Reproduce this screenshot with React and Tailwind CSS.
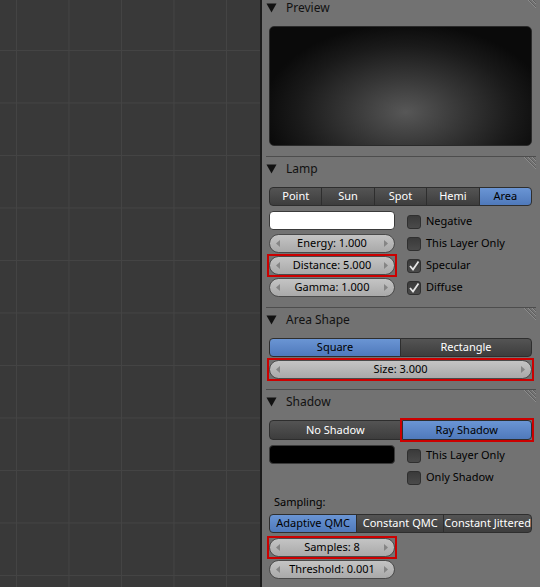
import React from 'react';

const font = { fontFamily: '"Noto Sans", "DejaVu Sans", sans-serif' };

function Hatch() {
  return (
    <svg width="16" height="16" viewBox="0 0 16 16" className="absolute right-[4px] top-[0px]">
      <path d="M4 0 L16 12 M8 0 L16 8 M12 0 L16 4" stroke="#8c8c8c" strokeWidth="1" />
      <path d="M5 0 L16 11 M9 0 L16 7 M13 0 L16 3" stroke="#5e5e5e" strokeWidth="1" />
    </svg>
  );
}

function Header({ title, first }) {
  return (
    <div className={`relative flex items-center h-[24px] ${first ? '-mt-[4px]' : ''}`}>
      <svg width="11" height="10" viewBox="0 0 11 10" className="ml-[4px] mr-[9px]">
        <path d="M0.5 0.5 H10.5 L5.5 9.5 Z" fill="#111" />
      </svg>
      <span className="text-[12px] text-[#111]">{title}</span>
      <Hatch />
    </div>
  );
}

function Section({ title, first, children, pb = 'pb-[10px]' }) {
  return (
    <div className={`${first ? '' : 'border-t border-[#4d4d4d] mx-[4px]'}`}>
      <div className={first ? '' : '-mx-[4px]'}>
        <Header title={title} first={first} />
        <div className={`px-[7px] pr-[8px] pt-[6px] ${pb}`}>{children}</div>
      </div>
    </div>
  );
}

function Toggle({ items, active }) {
  return (
    <div className="flex h-[19px]">
      {items.map((it, i) => {
        const on = i === active;
        const first = i === 0;
        const last = i === items.length - 1;
        return (
          <div
            key={it}
            className={`flex-1 flex items-center justify-center text-[11px] border border-[#2e2e2e] ${
              i > 0 ? '-ml-px' : ''
            } ${first ? 'rounded-l-[4px]' : ''} ${last ? 'rounded-r-[4px]' : ''} ${
              on
                ? 'bg-[linear-gradient(to_bottom,#6a95d4,#4f79bb)] text-[#000]'
                : 'bg-[linear-gradient(to_bottom,#545454,#3d3d3d)] text-white'
            }`}
          >
            <span className="whitespace-nowrap">{it}</span>
          </div>
        );
      })}
    </div>
  );
}

function Arrow({ dir }) {
  return (
    <svg width="4" height="7" viewBox="0 0 4 7">
      {dir === 'l' ? <path d="M4 0 V7 L0 3.5 Z" fill="#858585" /> : <path d="M0 0 V7 L4 3.5 Z" fill="#858585" />}
    </svg>
  );
}

function NumField({ label, full }) {
  return (
    <div className={`flex items-center h-[19px] ${full ? 'w-full' : 'w-[126px]'} rounded-full border border-[#4a4a4a] bg-[linear-gradient(to_bottom,#c4c4c4,#a9a9a9)] px-[6px] text-[11px] text-black`}>
      <Arrow dir="l" />
      <span className="flex-1 text-center whitespace-nowrap">{label}</span>
      <Arrow dir="r" />
    </div>
  );
}

function Red({ children, className = '' }) {
  return <div className={`outline-2 outline-[#cc0000] ${className}`}>{children}</div>;
}

function Check({ label, on }) {
  return (
    <div className="flex items-center h-[19px] pl-[8px]">
      <div className="relative w-[14px] h-[14px] rounded-[3px] border border-[#2f2f2f] bg-[linear-gradient(to_bottom,#3a3a3a,#4a4a4a)]">
        {on && (
          <svg width="14" height="14" viewBox="0 0 14 14" className="absolute -left-px -top-px">
            <path d="M3 7 L6 10.5 L11.5 2.5" stroke="#e6e6e6" strokeWidth="1.8" fill="none" />
          </svg>
        )}
      </div>
      <span className="ml-[5px] text-[11px] text-black whitespace-nowrap">{label}</span>
    </div>
  );
}

export default function App() {
  return (
    <div className="flex w-[540px] h-[587px] overflow-hidden" style={font}>
      <div className="w-[260px] h-full bg-[#393939] bg-[linear-gradient(to_right,#444444_1px,transparent_1px),linear-gradient(to_bottom,#444444_1px,transparent_1px)] bg-[size:52.5px_52.5px] bg-[position:16px_50px]" />
      <div className="w-[2px] h-full bg-[#1c1c1c]" />
      <div className="flex-1 h-full bg-[#727272]">
        <Section title="Preview" first>
          <div className="h-[120px] rounded-[5px] border border-[#2a2a2a] bg-[radial-gradient(ellipse_55%_75%_at_52%_72%,#575757_0%,#363636_40%,#1a1a1a_75%,#0a0a0a_100%)]" />
        </Section>

        <Section title="Lamp">
          <Toggle items={['Point', 'Sun', 'Spot', 'Hemi', 'Area']} active={4} />
          <div className="flex mt-[5px]">
            <div className="w-[130px] flex flex-col gap-[3px]">
              <div className="w-[126px] h-[19px] rounded-[4px] border border-[#3a3a3a] bg-white mb-[1px]" />
              <NumField label="Energy: 1.000" />
              <Red className="w-[126px]"><NumField label="Distance: 5.000" /></Red>
              <NumField label="Gamma: 1.000" />
            </div>
            <div className="flex flex-col gap-[3px] pt-[1px]">
              <Check label="Negative" />
              <Check label="This Layer Only" />
              <Check label="Specular" on />
              <Check label="Diffuse" on />
            </div>
          </div>
        </Section>

        <Section title="Area Shape">
          <Toggle items={['Square', 'Rectangle']} active={0} />
          <Red className="mt-[3px]"><NumField label="Size: 3.000" full /></Red>
        </Section>

        <Section title="Shadow">
          <div className="flex h-[20px]">
            <div className="flex-1 flex items-center justify-center text-[11px] text-white border border-[#2e2e2e] rounded-l-[4px] bg-[linear-gradient(to_bottom,#545454,#3d3d3d)]">No Shadow</div>
            <Red className="flex-1 flex">
              <div className="flex-1 flex items-center justify-center text-[11px] text-black border border-[#2e2e2e] rounded-r-[4px] bg-[linear-gradient(to_bottom,#6a95d4,#4f79bb)]">Ray Shadow</div>
            </Red>
          </div>
          <div className="flex mt-[5px]">
            <div className="w-[130px]">
              <div className="w-[126px] h-[19px] rounded-[4px] border border-[#3a3a3a] bg-black" />
            </div>
            <div className="flex flex-col gap-[3px] pt-[1px]">
              <Check label="This Layer Only" />
              <Check label="Only Shadow" />
            </div>
          </div>
          <div className="text-[11px] text-black mt-[7px] pl-[5px] leading-[16px]">Sampling:</div>
          <div className="mt-[4px]">
            <Toggle items={['Adaptive QMC', 'Constant QMC', 'Constant Jittered']} active={0} />
          </div>
          <div className="flex flex-col gap-[3px] mt-[5px]">
            <Red className="w-[126px]"><NumField label="Samples: 8" /></Red>
            <NumField label="Threshold: 0.001" />
          </div>
        </Section>
      </div>
    </div>
  );
}
